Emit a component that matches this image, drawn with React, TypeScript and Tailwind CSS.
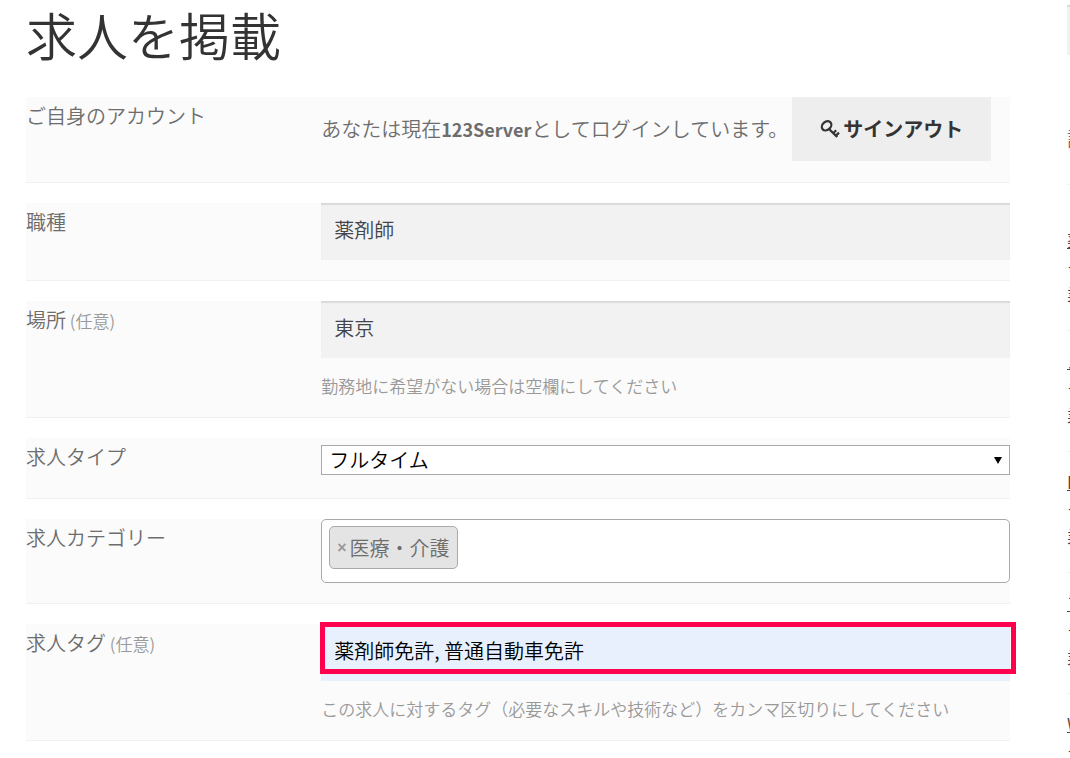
import { useState, type ReactNode } from "react";

const recentJobs = [
  { title: "薬剤師", place: "イオン", price: "業務委託" },
  { title: "スタッフ", place: "イオン", price: "業務委託" },
  { title: "Designer", place: "イオン", price: "業務委託" },
  { title: "アシスタント", place: "イオン", price: "業務委託" },
  { title: "Web制作", place: "イオン", price: "業務委託" },
];

const inputClass =
  "block h-[57px] w-full px-[13px] pb-1 text-xl shadow-[inset_0_2px_1px_rgba(0,0,0,0.1)] outline-none";

type RowProps = {
  label: string;
  htmlFor?: string;
  optional?: boolean;
  hint?: string;
  children: ReactNode;
};

function Row({ label, htmlFor, optional, hint, children }: RowProps) {
  return (
    <div className="flex border-b border-[#f0f0f0] bg-[#fbfbfb] pb-5">
      <label htmlFor={htmlFor} className="w-[30%] shrink-0 pt-[3px] leading-8">
        {label}
        {optional && <small className="text-[17px] text-[#999]"> (任意)</small>}
      </label>
      <div className="min-w-0 flex-1">
        {children}
        {hint && (
          <p className="pt-4 text-[17px] leading-[23px] whitespace-nowrap text-[#999]">{hint}</p>
        )}
      </div>
    </div>
  );
}

function KeyIcon() {
  return (
    <svg viewBox="0 0 20 20" className="size-5" fill="none" stroke="currentColor" aria-hidden="true">
      <ellipse cx="6.6" cy="6.8" rx="5.2" ry="4" strokeWidth="2.3" transform="rotate(-40 6.6 6.8)" />
      <path d="M9 10 L17.2 18" strokeWidth="2.4" />
      <path d="M13.4 14 L16.2 11.2 M16 16.6 L19 13.6" strokeWidth="2.2" />
    </svg>
  );
}

export default function App() {
  const [job, setJob] = useState("薬剤師");
  const [location, setLocation] = useState("東京");
  const [tags, setTags] = useState("薬剤師免許, 普通自動車免許");
  const [categories, setCategories] = useState(["医療・介護"]);

  return (
    <div className="flex gap-[57px] overflow-hidden bg-white pl-[26px] font-['Noto_Sans_CJK_JP',sans-serif] text-xl font-[350] text-[#6d6d6d]">
      {/* Job form */}
      <main className="min-w-0 flex-1 pt-0.5 pb-4">
        <h1 className="mb-[30px] text-[51px] leading-[65px] text-[#333]">求人を掲載</h1>

        <form className="space-y-5" onSubmit={(e) => e.preventDefault()}>
          <Row label="ご自身のアカウント">
            <div className="mb-px flex items-center gap-1 whitespace-nowrap">
              <p>
                あなたは現在<strong className="text-lg font-bold">123Server</strong>としてログインしています。
              </p>
              <button
                type="button"
                className="flex h-16 items-center gap-[3px] bg-[#eee] px-7 font-bold text-[#333]"
              >
                <KeyIcon />
                サインアウト
              </button>
            </div>
          </Row>

          <Row label="職種" htmlFor="job">
            <input
              id="job"
              className={`${inputClass} bg-[#f2f2f2] text-[#43454b]`}
              value={job}
              onChange={(e) => setJob(e.target.value)}
            />
          </Row>

          <Row label="場所" htmlFor="location" optional hint="勤務地に希望がない場合は空欄にしてください">
            <input
              id="location"
              className={`${inputClass} bg-[#f2f2f2] text-[#43454b]`}
              value={location}
              onChange={(e) => setLocation(e.target.value)}
            />
          </Row>

          <Row label="求人タイプ" htmlFor="type">
            <div className="relative mt-[7px] mb-[3px]">
              <select
                id="type"
                className="block h-[30px] w-full appearance-none border border-[#a9a9a9] bg-white pl-[7px] leading-7 text-black outline-none"
              >
                <option>フルタイム</option>
                <option>パートタイム</option>
              </select>
              <svg
                viewBox="0 0 8 7"
                className="pointer-events-none absolute top-3 right-2 h-[7px] w-2"
                aria-hidden="true"
              >
                <path d="M0 0h8L4 7z" />
              </svg>
            </div>
          </Row>

          <Row label="求人カテゴリー" htmlFor="category">
            <div className="flex h-16 items-start gap-2 rounded-[5px] border border-[#aaa] bg-white px-[7px] pt-1.5">
              {categories.map((name) => (
                <span
                  key={name}
                  className="flex h-[43px] shrink-0 items-center rounded-[5px] border border-[#aaa] bg-[#e4e4e4] px-[7px] whitespace-nowrap"
                >
                  <button
                    type="button"
                    aria-label={`${name}を削除`}
                    className="mr-[3px] font-['Liberation_Sans',sans-serif] text-base font-bold text-[#999]"
                    onClick={() => setCategories(categories.filter((c) => c !== name))}
                  >
                    ×
                  </button>
                  {name}
                </span>
              ))}
              <input id="category" className="h-11 min-w-0 flex-1 outline-none" />
            </div>
          </Row>

          <Row
            label="求人タグ"
            htmlFor="tags"
            optional
            hint="この求人に対するタグ（必要なスキルや技術など）をカンマ区切りにしてください"
          >
            <div className="relative">
              <input
                id="tags"
                className={`${inputClass} bg-[#e8f0fe] text-black`}
                value={tags}
                onChange={(e) => setTags(e.target.value)}
              />
              <div className="pointer-events-none absolute -top-0.5 -right-1.5 -left-px h-[52px] border-5 border-[#ff004f]" />
            </div>
          </Row>
        </form>
      </main>

      {/* Sidebar, runs past the right edge */}
      <aside className="-mr-[297px] h-[758px] w-[300px] shrink-0 overflow-hidden pt-[5px]">
        <input
          aria-label="検索"
          className="block h-[50px] w-full bg-[#f2f2f2] shadow-[inset_0_2px_1px_rgba(0,0,0,0.1)]"
        />
        <h2 className="mt-[68px] border-b border-[#f0f0f0] pb-[29px] leading-8">記事一覧</h2>
        <ul className="pt-[25px]">
          {recentJobs.map((item) => (
            <li key={item.title} className="h-[121px] border-b border-[#f0f0f0] pt-4 text-[17px] text-[#43454b]">
              <a href="#" className="block leading-7 underline">
                {item.title}
              </a>
              <p className="leading-6">{item.place}</p>
              <p className="leading-8">{item.price}</p>
            </li>
          ))}
        </ul>
      </aside>
    </div>
  );
}
